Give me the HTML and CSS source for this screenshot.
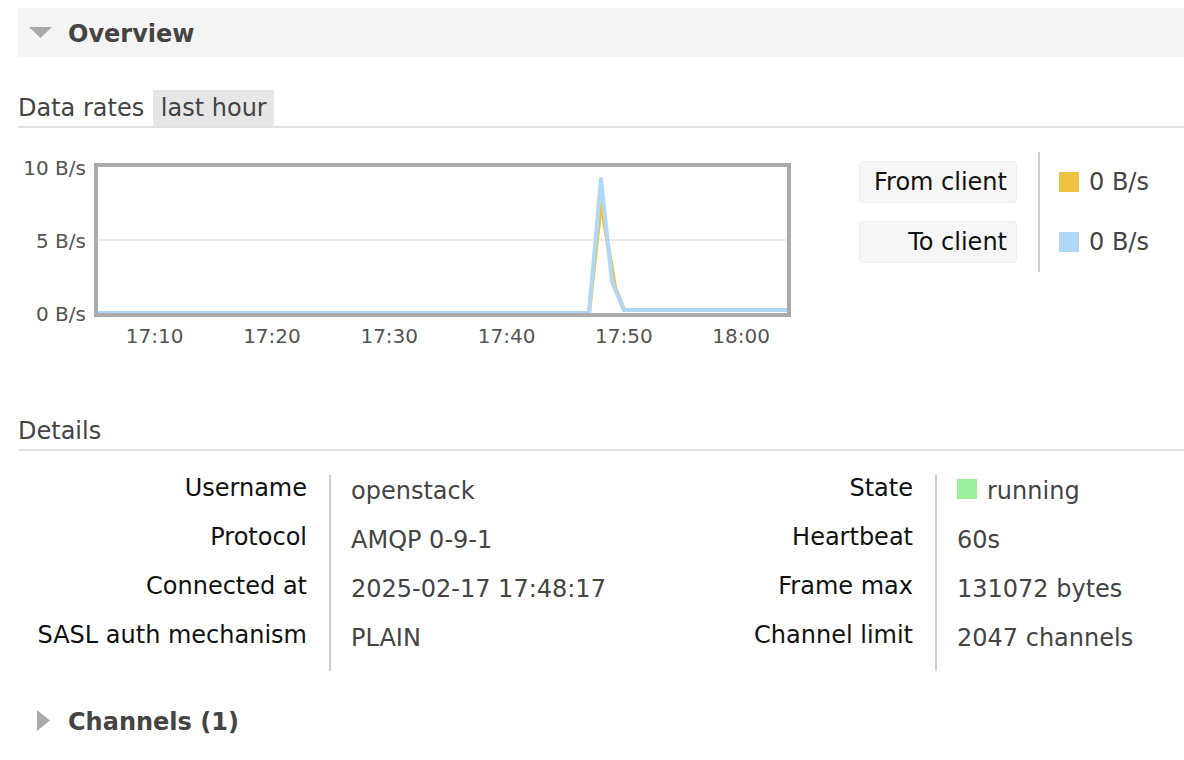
FILE: index.html
```html
<!DOCTYPE html>
<html>
<head>
<meta charset="utf-8">
<link rel="stylesheet" href="styles.css">
</head>
<body>
<div class="main">
  <div class="section-head open">
    <svg class="toggle" width="23" height="23" viewBox="0 0 23 23"><polygon points="0,6 23,6 11.5,17" fill="#a9a9a9"/></svg>
    <h2>Overview</h2>
  </div>

  <h3 class="subhead">Data rates <span class="tab">last hour</span></h3>

  <div class="rates">
    <div class="chart">
      <div class="yaxis">
        <span>10 B/s</span>
        <span>5 B/s</span>
        <span>0 B/s</span>
      </div>
      <div class="plot-wrap">
        <svg class="plot" width="697" height="154" viewBox="0 0 697 154">
          <line x1="4" y1="77" x2="693" y2="77" stroke="#ebebeb" stroke-width="2"/>
          <polyline points="4,150 495,150 507,40 521,124 530,147 693,147" fill="none" stroke="#edc240" stroke-width="4" stroke-linejoin="round"/>
          <polyline points="4,150 495,150 507,16 518,119 530,147 693,147" fill="none" stroke="#afd8f8" stroke-width="4" stroke-linejoin="round"/>
          <rect x="2" y="2" width="693" height="150" fill="none" stroke="#aaaaaa" stroke-width="4"/>
        </svg>
        <div class="xaxis">
          <span>17:10</span><span>17:20</span><span>17:30</span><span>17:40</span><span>17:50</span><span>18:00</span>
        </div>
      </div>
    </div>

    <div class="legend">
      <div class="legend-names">
        <div class="legend-btn">From client</div>
        <div class="legend-btn">To client</div>
      </div>
      <div class="legend-values">
        <div class="legend-val"><span class="swatch swatch-from"></span>0 B/s</div>
        <div class="legend-val"><span class="swatch swatch-to"></span>0 B/s</div>
      </div>
    </div>
  </div>

  <h3 class="subhead details-head">Details</h3>

  <div class="details">
    <div class="facts facts-left">
      <div class="th">Username</div><div class="td">openstack</div>
      <div class="th">Protocol</div><div class="td">AMQP 0-9-1</div>
      <div class="th">Connected at</div><div class="td">2025-02-17 17:48:17</div>
      <div class="th">SASL auth mechanism</div><div class="td">PLAIN</div>
    </div>
    <div class="facts facts-right">
      <div class="th">State</div><div class="td"><span class="state-dot"></span>running</div>
      <div class="th">Heartbeat</div><div class="td">60s</div>
      <div class="th">Frame max</div><div class="td">131072 bytes</div>
      <div class="th">Channel limit</div><div class="td">2047 channels</div>
    </div>
  </div>

  <div class="section-head closed">
    <svg class="toggle" width="23" height="23" viewBox="0 0 23 23"><polygon points="8,1 21,11.5 8,22" fill="#a9a9a9"/></svg>
    <h2>Channels (1)</h2>
  </div>
</div>
</body>
</html>
```

FILE: styles.css
```css
html, body {
  margin: 0;
  padding: 0;
  background: #fff;
}

body {
  font-family: "DejaVu Sans", Verdana, sans-serif;
  font-size: 24px;
  color: #444;
}

.main {
  padding: 8px 0 0 18px;
}

.section-head {
  display: flex;
  align-items: center;
  height: 49px;
  padding-left: 11px;
  gap: 16px;
}

.section-head.open {
  background: #f4f4f4;
}

.section-head.closed {
  margin-top: 25px;
}

.section-head h2 {
  margin: 0;
  font-size: 24px;
  font-weight: bold;
  color: #444;
  line-height: 30px;
  padding-top: 2px;
}

.toggle {
  display: block;
  flex: none;
}

.subhead {
  margin: 33px 0 0 0;
  font-size: 24px;
  font-weight: normal;
  line-height: 36px;
  color: #444;
  border-bottom: 2px solid #e2e2e2;
}

.tab {
  display: inline-block;
  background: #e6e6e6;
  padding: 1px 7px 0 8px;
  line-height: 35px;
  margin-left: 1px;
}

.rates {
  display: flex;
  align-items: flex-start;
}

.chart {
  display: flex;
  align-items: flex-start;
  margin-top: 30px;
}

.yaxis {
  width: 68px;
  height: 166px;
  display: flex;
  flex-direction: column;
  justify-content: space-between;
  align-items: flex-end;
  font-size: 20px;
  line-height: 20px;
  color: #545454;
}

.plot-wrap {
  margin-left: 8px;
  margin-top: 5px;
  width: 697px;
}

.plot {
  display: block;
}

.xaxis {
  display: flex;
  margin-top: 7px;
  padding-left: 2px;
  font-size: 20px;
  line-height: 24px;
  color: #545454;
}

.xaxis span {
  flex: none;
  width: 117.3px;
  text-align: center;
}

.legend {
  display: flex;
  margin-left: 68px;
  margin-top: 24px;
}

.legend-names {
  display: flex;
  flex-direction: column;
  gap: 18px;
  padding: 9px 0;
}

.legend-btn {
  width: 158px;
  height: 42px;
  box-sizing: border-box;
  background: #f6f6f6;
  border: 1px solid #ececec;
  border-radius: 4px;
  text-align: right;
  padding-right: 9px;
  line-height: 41px;
  color: #111;
}

.legend-values {
  margin-left: 21px;
  border-left: 2px solid #cfcfcf;
  padding: 9px 0 9px 19px;
  display: flex;
  flex-direction: column;
  gap: 18px;
}

.legend-val {
  height: 42px;
  display: flex;
  align-items: center;
  gap: 10px;
  color: #444;
}

.swatch {
  display: inline-block;
  width: 20px;
  height: 20px;
}

.swatch-from { background: #edc240; }
.swatch-to { background: #afd8f8; }

.details-head {
  margin-top: 65px;
}

.details {
  display: flex;
  margin-top: 24px;
}

.facts {
  display: grid;
  align-content: start;
}

.facts-left {
  grid-template-columns: 311px 300px;
}

.facts-right {
  grid-template-columns: 306px auto;
}

.th {
  text-align: right;
  padding: 0 22px 23px 0;
  line-height: 26px;
  color: #111;
  white-space: nowrap;
}

.td {
  border-left: 2px solid #cfcfcf;
  padding: 3px 0 20px 20px;
  line-height: 26px;
  color: #444;
  display: flex;
  align-items: center;
  white-space: nowrap;
}

.state-dot {
  display: inline-block;
  width: 20px;
  height: 20px;
  background: #9cf09c;
  margin-right: 10px;
  margin-top: -4px;
}
```
